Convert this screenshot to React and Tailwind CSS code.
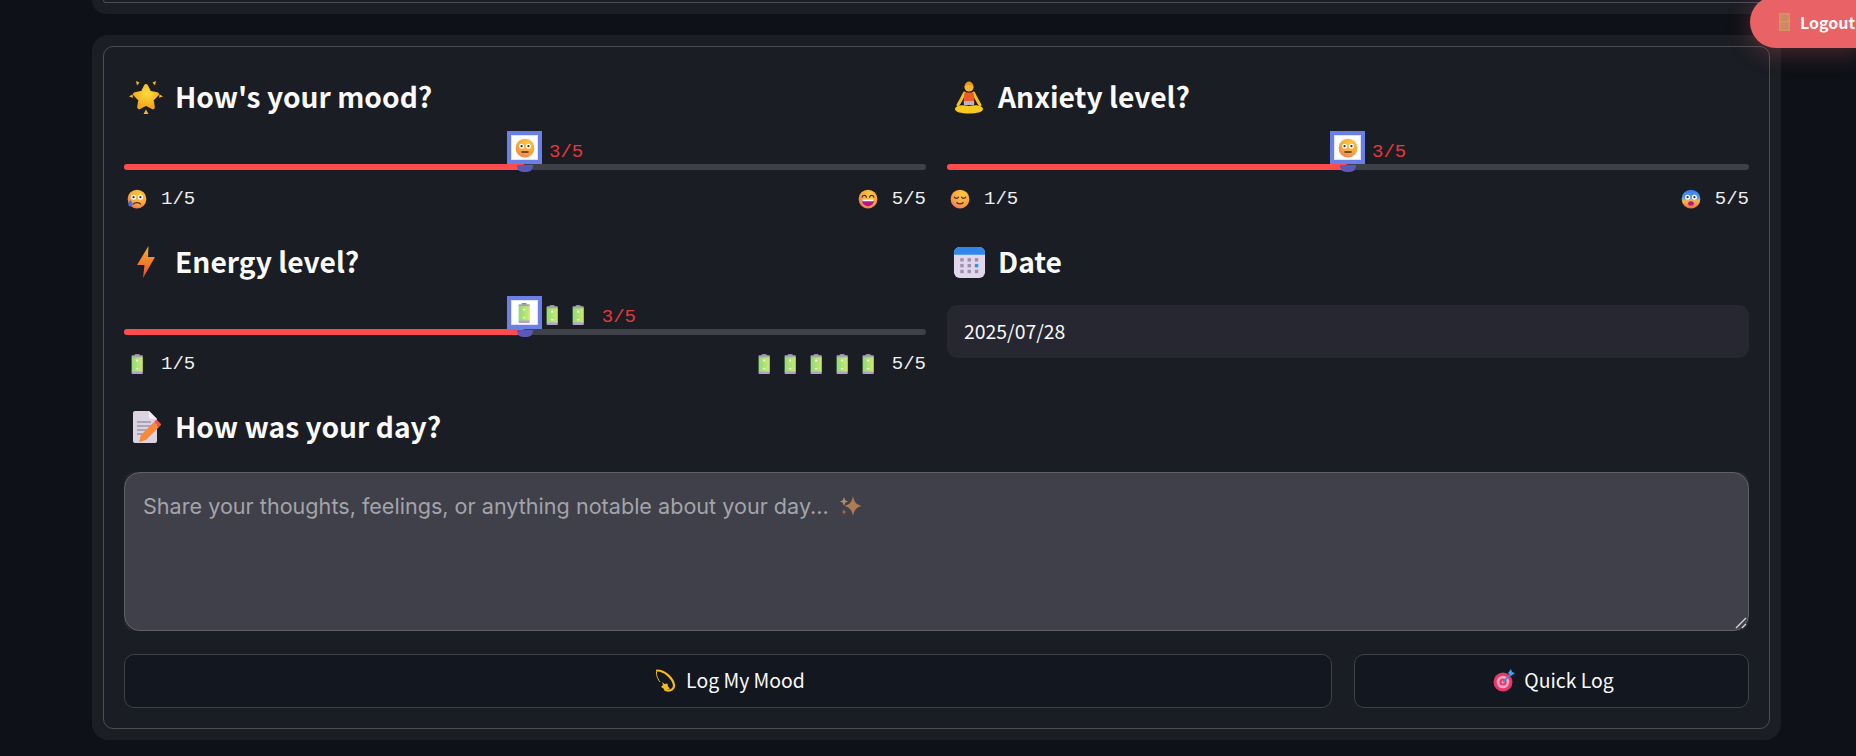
import { useId } from "react";

const SANS = "font-['Noto_Sans_CJK_SC','Noto_Sans',sans-serif]";
const MONO = "font-['Liberation_Mono','DejaVu_Sans_Mono',monospace]";

function Face({ size = 20, from = "#fdc83f", mid = "#f9a43a", to = "#f0705a", children }) {
  const id = useId();
  return (
    <svg width={size} height={size} viewBox="0 0 32 32" className="shrink-0">
      <defs>
        <radialGradient id={id} cx="0.62" cy="0.28" r="0.9">
          <stop offset="0" stopColor={from} />
          <stop offset="0.55" stopColor={mid} />
          <stop offset="1" stopColor={to} />
        </radialGradient>
      </defs>
      <circle cx="16" cy="16" r="15" fill={`url(#${id})`} />
      {children}
    </svg>
  );
}

function WideEyes() {
  return (
    <>
      <circle cx="10.500" cy="13" r="4" fill="#fff" />
      <circle cx="21.500" cy="13" r="4" fill="#fff" />
      <circle cx="10.500" cy="13" r="1.800" fill="#402a32" />
      <circle cx="21.500" cy="13" r="1.800" fill="#402a32" />
    </>
  );
}

const NeutralFace = () => (
  <Face>
    <WideEyes />
    <rect x="10" y="21" width="12" height="2.400" rx="1" fill="#402a32" />
  </Face>
);

const TearFace = () => (
  <Face to="#ec5a6a">
    <WideEyes />
    <path d="M10.500 24c1.500-3 9.500-3 11 0" fill="none" stroke="#402a32" strokeWidth="2" strokeLinecap="round" />
    <path d="M5 17c2 3 4 5 4 7.500a3.500 3.500 0 0 1-7 0c0-2.500 2-4.500 3-7.500z" fill="#3f6fe0" />
  </Face>
);

const LaughFace = () => (
  <Face to="#e8607a">
    <path d="M6.500 13c1-3.500 6-3.500 7 0M18.500 13c1-3.500 6-3.500 7 0" fill="none" stroke="#402a32" strokeWidth="2" strokeLinecap="round" />
    <path d="M6 16.500h20c0 6.500-4.500 11-10 11S6 23 6 16.500z" fill="#b0178a" />
    <path d="M6.500 16.500h19l-.5 3H7z" fill="#fff" />
  </Face>
);

const CalmFace = () => (
  <Face to="#f0647c">
    <path d="M7 13c1.500 2.500 5 2.500 6.500 0M18.500 13c1.500 2.500 5 2.500 6.500 0" fill="none" stroke="#402a32" strokeWidth="2" strokeLinecap="round" />
    <path d="M11 22c2.500 2.500 7.500 2.500 10 0" fill="none" stroke="#402a32" strokeWidth="2" strokeLinecap="round" />
  </Face>
);

function FearFace() {
  const id = useId();
  return (
    <svg width="20" height="20" viewBox="0 0 32 32" className="shrink-0">
      <defs>
        <linearGradient id={id} x1="0" y1="0" x2="0" y2="1">
          <stop offset="0" stopColor="#2f7de8" />
          <stop offset="0.45" stopColor="#5a9cf0" />
          <stop offset="0.6" stopColor="#fbb640" />
          <stop offset="1" stopColor="#f0703c" />
        </linearGradient>
      </defs>
      <circle cx="16" cy="16" r="15" fill={`url(#${id})`} />
      <WideEyes />
      <ellipse cx="16" cy="23" rx="4.500" ry="3.500" fill="#b0178a" />
    </svg>
  );
}

function Battery({ size = 20 }) {
  const id = useId();
  return (
    <svg width={size * 0.62} height={size} viewBox="0 0 20 32" className="shrink-0">
      <defs>
        <linearGradient id={id} x1="0" y1="0" x2="1" y2="0">
          <stop offset="0" stopColor="#8fdc7c" />
          <stop offset="1" stopColor="#cfe86c" />
        </linearGradient>
      </defs>
      <rect x="6" y="0" width="8" height="3" rx="1" fill="#8d8a96" />
      <rect x="1" y="2" width="18" height="4" rx="1" fill="#a8a5b2" />
      <rect x="1" y="5" width="18" height="24" fill={`url(#${id})`} />
      <rect x="1" y="28" width="18" height="4" rx="1" fill="#b49fd0" />
      <rect x="8.500" y="9" width="3" height="3" fill="#fff" />
      <rect x="8" y="23" width="4" height="1.500" fill="#fff" />
    </svg>
  );
}

// A battery in a full emoji-wide cell, so it takes the same room as a face.
function BatterySlot() {
  return (
    <span className="flex w-[20px] justify-center">
      <Battery />
    </span>
  );
}

function Star() {
  const id = useId();
  return (
    <svg width="34" height="34" viewBox="0 0 34 34" className="shrink-0">
      <defs>
        <radialGradient id={id} cx="0.55" cy="0.35" r="0.65">
          <stop offset="0" stopColor="#ffdc3f" />
          <stop offset="1" stopColor="#f4a81c" />
        </radialGradient>
      </defs>
      <path d="M17 6l3.500 6.800 7.500 1.300-5.300 5.500 1.100 7.600L17 23.800l-6.800 3.400 1.100-7.600L6 14.100l7.500-1.300z" fill={`url(#${id})`} stroke={`url(#${id})`} strokeWidth="4" strokeLinejoin="round" />
      <path d="M7 1l3.500 1.500-2.500 3zM27 1l-3.500 1.500 2.500 3zM0 16.500l3.500-2.300.5 3.500zM34 16.500l-3.500-2.300-.5 3.500zM17 29.500l2.500 4.500h-5z" fill="#f2b81e" />
    </svg>
  );
}

function Meditate() {
  return (
    <svg width="30" height="34" viewBox="0 0 30 34" className="shrink-0">
      <circle cx="15" cy="7" r="4.600" fill="#f5b52c" />
      <path d="M11 6c0-6 8-6 8 0-2-1.500-6-1.500-8 0z" fill="#e09a1e" />
      <path d="M10.500 13c-1.500 3-4 8-6.500 12M19.500 13c1.500 3 4 8 6.500 12" fill="none" stroke="#f8bf1f" strokeWidth="3" strokeLinecap="round" />
      <path d="M10.500 12.500h9l1 11h-11z" fill="#ea5a2a" />
      <path d="M10 21h10v4H10z" fill="#b9b4bf" />
      <path d="M1 29c0-3 7-5 14-3 7-2 14 0 14 3 0 3-6 4.500-14 4.500S1 32 1 29z" fill="#f9c91e" />
    </svg>
  );
}

function Zap() {
  const id = useId();
  return (
    <svg width="20" height="34" viewBox="0 0 20 34" className="shrink-0">
      <defs>
        <linearGradient id={id} x1="0" y1="0" x2="0" y2="1">
          <stop offset="0" stopColor="#f9b02a" />
          <stop offset="1" stopColor="#ea4f2e" />
        </linearGradient>
      </defs>
      <path d="M12.500 1L1 20h7.500L7 33l12-21h-7z" fill={`url(#${id})`} />
    </svg>
  );
}

function Calendar() {
  return (
    <svg width="33" height="33" viewBox="0 0 34 34" className="shrink-0">
      <rect x="1" y="1" width="32" height="32" rx="6" fill="#e2d6ec" />
      <path d="M1 9V7a6 6 0 0 1 6-6h20a6 6 0 0 1 6 6v2z" fill="#2f86ec" />
      <g fill="#9a92a8">
        <rect x="7.500" y="12.500" width="3.500" height="3.500" />
        <rect x="15" y="12.500" width="3.500" height="3.500" />
        <rect x="22.500" y="12.500" width="3.500" height="3.500" />
        <rect x="7.500" y="18.500" width="3.500" height="3.500" />
        <rect x="15" y="18.500" width="3.500" height="3.500" />
        <rect x="7.500" y="24.500" width="3.500" height="3.500" />
        <rect x="15" y="24.500" width="3.500" height="3.500" />
        <rect x="22.500" y="24.500" width="3.500" height="3.500" />
      </g>
      <rect x="22.500" y="18.500" width="3.500" height="3.500" fill="#1d9bf0" />
    </svg>
  );
}

function Memo() {
  return (
    <svg width="30" height="34" viewBox="0 0 30 34" className="shrink-0">
      <path d="M2 3a2 2 0 0 1 2-2h14l8 8v22a2 2 0 0 1-2 2H4a2 2 0 0 1-2-2z" fill="#dcd3e2" />
      <path d="M18 1l8 8h-6a2 2 0 0 1-2-2z" fill="#f2eef5" />
      <path d="M6 12h14M6 16h14M6 20h12M6 24h8" stroke="#9d96a8" strokeWidth="1.400" />
      <path d="M8 32l2-7L23 12l5 5-13 13z" fill="#f58a3c" />
      <path d="M23 12l2.500-2.500 5 5L28 17z" fill="#f4534e" />
    </svg>
  );
}

function Dizzy() {
  return (
    <svg width="22" height="23" viewBox="0 0 22 23" className="shrink-0">
      <path d="M2 1.500c8 0 16 8 17 14.500 .5 4-3 6-7 5.500" fill="none" stroke="#f6b91f" strokeWidth="2.200" strokeLinecap="round" />
      <path d="M2 2c-1.500 2 0 7 3 11" fill="none" stroke="#f6b91f" strokeWidth="1" />
      <path d="M7 13l2.500 2 3-.5 .5 3 2 2-3.500 1.500-1.500 1.500-1.500-3-2.500-1.500 2-2z" fill="#f6b91f" />
    </svg>
  );
}

function Target() {
  return (
    <svg width="22" height="24" viewBox="0 0 22 24" className="shrink-0">
      <circle cx="10" cy="14" r="9.500" fill="#e8386a" />
      <circle cx="10" cy="14" r="6.300" fill="#f5a6c0" />
      <circle cx="10" cy="14" r="3.600" fill="#e8386a" />
      <circle cx="10" cy="14" r="1.500" fill="#f5a6c0" />
      <path d="M10 14l9-9" stroke="#2f8fe8" strokeWidth="1.600" />
      <path d="M15 5l3-4 1 3 3 1-4 3z" fill="#3fa0f0" />
    </svg>
  );
}

function Door() {
  return (
    <svg width="11" height="18" viewBox="0 0 11 18" className="shrink-0">
      <rect x="0" y="0" width="11" height="18" fill="#d9915f" />
      <rect x="1.500" y="1.500" width="8" height="6.500" fill="#c98a68" />
      <rect x="1.500" y="10" width="8" height="6.500" fill="#c98a68" />
      <rect x="9.500" y="7" width="1.500" height="1.500" fill="#f5a623" />
    </svg>
  );
}

function Sparkles() {
  return (
    <svg width="24" height="24" viewBox="0 0 24 24" className="shrink-0 opacity-60">
      <path d="M14 2c1 5.500 3 8.500 8.500 10-5.500 1.500-7.500 4.500-8.500 10-1-5.500-3-8.500-8.500-10 5.500-1.500 7.500-4.500 8.500-10z" fill="#f8a45c" />
      <path d="M5 3l1.200 3.300L9 7.500 6.200 8.700 5 12 3.800 8.700 1 7.500l2.800-1.200z" fill="#f8c87a" />
      <path d="M5 15l.8 2.200 1.800.8-1.800.8L5 21l-.8-2.200-1.800-.8 1.800-.8z" fill="#f07a4a" />
    </svg>
  );
}

function Heading({ icon, children, className = "" }) {
  return (
    <div className={`flex h-[34px] items-center gap-[12px] pl-[5px] ${className}`}>
      <span className="flex w-[34px] justify-center">{icon}</span>
      <h2 className={`${SANS} pb-[2px] text-[28.2px] leading-none font-semibold text-[#fafafa]`}>{children}</h2>
    </div>
  );
}

function Thumb({ children }) {
  return (
    <div className="flex h-[33px] w-[35px] items-center justify-center border-4 border-[#6b80e6] bg-white shadow-[inset_0_0_0_1px_#dfe3f5]">
      {children}
    </div>
  );
}

// Slider with the value bubble riding on the handle at 50%.
function Slider({ thumb, extra, min, max, valueGap = "ml-[7px]" }) {
  return (
    <div>
      <div className="relative h-[50px]">
        <div className="absolute bottom-0 left-[383px] flex items-end">
          <Thumb>{thumb}</Thumb>
          {extra}
          <span className={`${MONO} ${valueGap} mb-[2px] text-[19px] leading-[20px] text-[#e5383b]`}>3/5</span>
        </div>
      </div>
      <div className="relative h-[6px] rounded-full bg-[#3f4149]">
        <div className="h-full w-[401px] rounded-full bg-[#ff4b4b]" />
        <div className="absolute top-[1px] left-[393px] h-[7px] w-[16px] rounded-b-[6px] bg-[#5a58b8]" />
      </div>
      <div className="mt-[19px] flex h-[20px] items-center justify-between pl-[3px]">
        <MinMax icon={min} value="1/5" />
        <MinMax icon={max} value="5/5" />
      </div>
    </div>
  );
}

function MinMax({ icon, value }) {
  return (
    <div className="flex items-center gap-[14px]">
      {icon}
      <span className={`${MONO} text-[19px] leading-[20px] text-[#f0f0f0]`}>{value}</span>
    </div>
  );
}

function FiveBatteries() {
  return (
    <div className="flex gap-[6px]">
      <BatterySlot />
      <BatterySlot />
      <BatterySlot />
      <BatterySlot />
      <BatterySlot />
    </div>
  );
}

function ActionButton({ icon, children }) {
  return (
    <button
      type="button"
      className={`${SANS} flex h-[54px] items-center justify-center gap-[9px] rounded-[10px] border border-[#3e414a] bg-[#131720] pb-[2px] pl-[4px] text-[19.4px] text-[#fafafa]`}
    >
      {icon}
      {children}
    </button>
  );
}

export default function App() {
  return (
    <div className="relative h-[756px] overflow-hidden bg-[#0e1117]">
      {/* Previous card, only its bottom edge is in view */}
      <div className="ml-[92px] h-[14px] w-[1689px] rounded-b-[16px] bg-[#1b1e23] px-[11px]">
        <div className="h-[3px] rounded-b-[10px] border border-t-0 border-[#4a4c52] bg-[#1a1d24]" />
      </div>

      <div className="mt-[21px] ml-[92px] w-[1689px] rounded-[16px] bg-[#1b1e23] p-[11px]">
        <div className="h-[683px] rounded-[10px] border border-[#4a4c52] bg-[#1a1d24] px-[20px] pt-[33px]">
          <div className="grid grid-cols-2 gap-x-[21px]">
            <div>
              <Heading icon={<Star />}>How's your mood?</Heading>
              <Slider thumb={<NeutralFace />} min={<TearFace />} max={<LaughFace />} />
            </div>
            <div>
              <Heading icon={<Meditate />}>Anxiety level?</Heading>
              <Slider thumb={<NeutralFace />} min={<CalmFace />} max={<FearFace />} />
            </div>
            <div className="mt-[36px]">
              <Heading icon={<Zap />}>Energy level?</Heading>
              <Slider
                thumb={<Battery />}
                extra={
                  <div className="mb-[4px] ml-[4px] flex gap-[14px]">
                    <Battery />
                    <Battery />
                  </div>
                }
                valueGap="ml-[17px]"
                min={<BatterySlot />}
                max={<FiveBatteries />}
              />
            </div>
            <div className="mt-[36px]">
              <Heading icon={<Calendar />}>Date</Heading>
              <div className={`${SANS} mt-[26px] flex h-[53px] items-center rounded-[10px] bg-[#262730] px-[17px] pb-[2px] text-[19.4px] text-[#fafafa]`}>
                2025/07/28
              </div>
            </div>
          </div>

          <Heading icon={<Memo />} className="mt-[36px]">How was your day?</Heading>

          <div className="mt-[28px] rounded-[10px] bg-[#262730]">
            <div className="relative flex h-[159px] items-start rounded-[16px] border border-[#5f6068] bg-[#3f4049] px-[18px] pt-[17px]">
              <span className="flex items-center gap-[10px] font-['Inter',sans-serif] text-[21.6px] leading-[32px] text-[#a3a4aa]">
                Share your thoughts, feelings, or anything notable about your day...
                <Sparkles />
              </span>
              <svg width="12" height="12" viewBox="0 0 12 12" className="absolute right-[1px] bottom-[1px]">
                <path d="M1 11L11 1M7 11l4-4" stroke="#d8d8dc" strokeWidth="1.300" />
              </svg>
            </div>
          </div>

          <div className="mt-[23px] grid grid-cols-[1208px_1fr] gap-x-[22px]">
            <ActionButton icon={<Dizzy />}>Log My Mood</ActionButton>
            <ActionButton icon={<Target />}>Quick Log</ActionButton>
          </div>
        </div>
      </div>

      {/* Floating logout button */}
      <button
        type="button"
        className={`${SANS} absolute top-[-4px] right-[-8px] flex h-[52px] w-[114px] items-center gap-[10px] rounded-l-[26px] bg-[#e86266] pl-[29px] text-[16px] font-semibold whitespace-nowrap text-[#fafafa] shadow-[0_4px_24px_rgba(232,98,102,0.3)]`}
      >
        <Door />
        Logout
      </button>
    </div>
  );
}
